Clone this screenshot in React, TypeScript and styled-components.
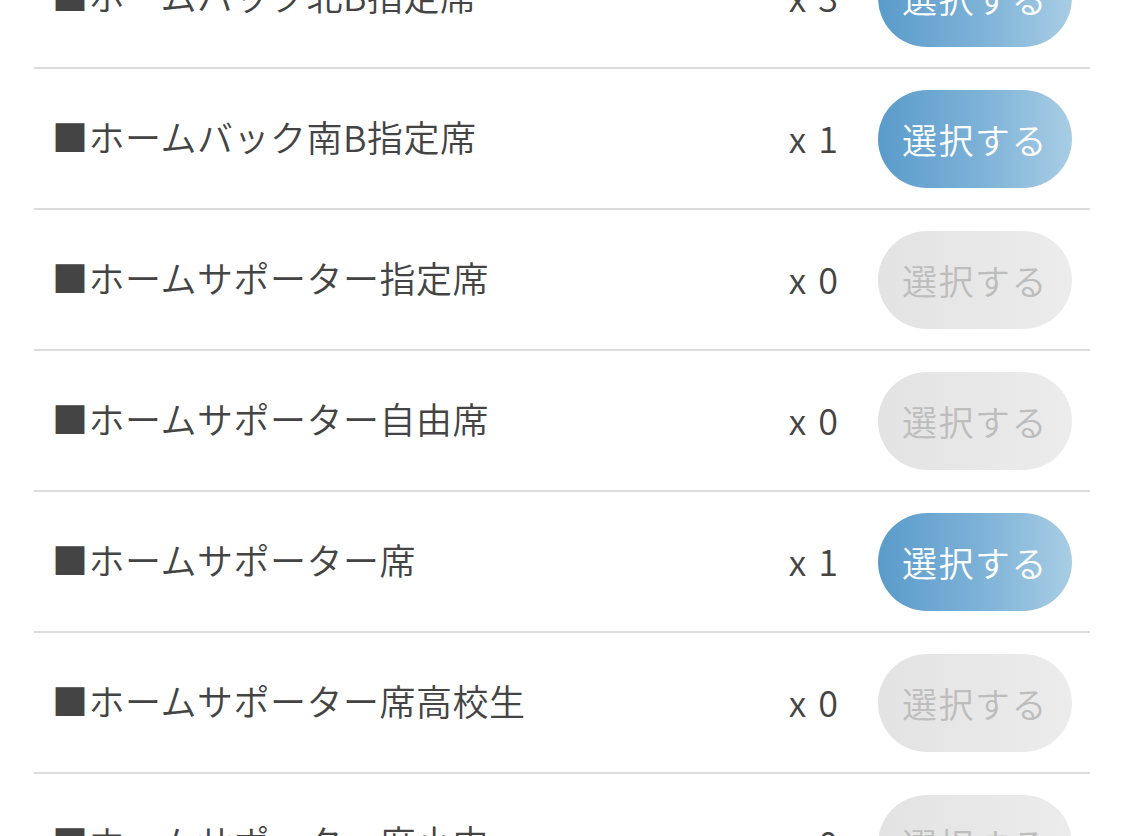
import React from "react";
import styled, { createGlobalStyle } from "styled-components";

const GlobalStyle = createGlobalStyle`
  html, body {
    margin: 0;
    padding: 0;
    background: #ffffff;
    overflow: hidden;
  }
  body {
    font-family: "Noto Sans CJK JP", "Noto Sans", sans-serif;
    color: #444444;
  }
`;

const List = styled.ul`
  list-style: none;
  margin: -72px 0 0 0;
  padding: 0 35px 0 34px;
`;

const Row = styled.li`
  display: flex;
  align-items: center;
  height: 139px;
  border-bottom: 2px solid #dcdcdc;
  padding: 0 18px 0 18px;
`;

const SeatName = styled.span`
  flex: 1;
  font-size: 36px;
  font-weight: 350;
  letter-spacing: 0.5px;
  line-height: 1;
  color: #444444;
  white-space: nowrap;
  margin-bottom: 5px;
`;

const Count = styled.span`
  font-size: 36px;
  font-weight: 350;
  line-height: 1;
  word-spacing: 4px;
  color: #444444;
  margin-right: 40px;
  margin-bottom: 4px;
  white-space: nowrap;
`;

const SelectButton = styled.button<{ $active: boolean }>`
  width: 194px;
  height: 98px;
  border: none;
  border-radius: 49px;
  font-family: "Noto Sans CJK JP", "Noto Sans", sans-serif;
  font-size: 35px;
  font-weight: 350;
  letter-spacing: 1.5px;
  padding: 0;
  color: ${(p) => (p.$active ? "#ffffff" : "#bdbdbd")};
  background: ${(p) =>
    p.$active
      ? "linear-gradient(90deg, #5a9bcb 0%, #7fb3d8 55%, #a8cde4 100%)"
      : "linear-gradient(90deg, #e3e3e3 0%, #ececec 100%)"};
`;

const seats = [
  { name: "■ホームバック北B指定席", count: 3 },
  { name: "■ホームバック南B指定席", count: 1 },
  { name: "■ホームサポーター指定席", count: 0 },
  { name: "■ホームサポーター自由席", count: 0 },
  { name: "■ホームサポーター席", count: 1 },
  { name: "■ホームサポーター席高校生", count: 0 },
  { name: "■ホームサポーター席小中", count: 0 },
];

const App: React.FC = () => (
  <>
    <GlobalStyle />
    <List>
      {seats.map((s) => (
        <Row key={s.name}>
          <SeatName>{s.name}</SeatName>
          <Count>x {s.count}</Count>
          <SelectButton $active={s.count > 0}>選択する</SelectButton>
        </Row>
      ))}
    </List>
  </>
);

export default App;
